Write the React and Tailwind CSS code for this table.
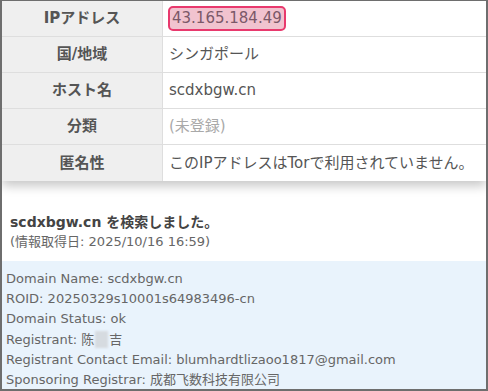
const rows = [
  { label: 'IPアドレス', value: '43.165.184.49', kind: 'ip' },
  { label: '国/地域', value: 'シンガポール' },
  { label: 'ホスト名', value: 'scdxbgw.cn' },
  { label: '分類', value: '(未登録)', kind: 'muted' },
  { label: '匿名性', value: 'このIPアドレスはTorで利用されていません。' },
];

const whois = [
  'Domain Name: scdxbgw.cn',
  'ROID: 20250329s10001s64983496-cn',
  'Domain Status: ok',
  null,
  'Registrant Contact Email: blumhardtlizaoo1817@gmail.com',
  'Sponsoring Registrar: 成都飞数科技有限公司',
];

const App = () => {
  return (
    <div
      className="w-[488px] h-[391px] overflow-hidden bg-white border-t border-l-2 border-r-2 border-b-2 border-[#6e6e6e] text-[#555]"
      style={{ fontFamily: '"DejaVu Sans", "Noto Sans CJK JP", sans-serif' }}
    >
      <div className="shadow-[0_5px_10px_rgba(0,0,0,0.22)]">
        {rows.map((row, i) => (
          <div
            key={row.label}
            className={`flex h-[36px] ${i < rows.length - 1 ? 'border-b border-[#dedede]' : ''}`}
          >
            <div className="w-[161px] flex-shrink-0 bg-[#efefef] border-r border-[#dedede] flex items-center justify-center font-bold text-[15px] text-[#555]">
              {row.label}
            </div>
            <div className="flex-1 flex items-center pl-[5px] text-[15px]">
              {row.kind === 'ip' ? (
                <span className="px-[2px] h-[25px] flex items-center rounded-[5px] border-2 border-[#e8396d] bg-[#f1c3cf] text-[#7b5868]">
                  {row.value}
                </span>
              ) : (
                <span className={`pl-[1px] ${row.kind === 'muted' ? 'text-[#a9a9a9]' : 'text-[#555]'}`}>
                  {row.value}
                </span>
              )}
            </div>
          </div>
        ))}
      </div>

      <div className="pt-[31px] pl-[8px] pb-[9px]">
        <div className="font-bold text-[14px] leading-[20px] text-[#444]">scdxbgw.cn を検索しました。</div>
        <div className="text-[13px] leading-[20px] text-[#666]">(情報取得日: 2025/10/16 16:59)</div>
      </div>

      <div className="bg-[#e9f3fc] pt-[8px] pl-[4px] pb-[10px] text-[13px] leading-[20.2px] text-[#666]">
        {whois.map((line, i) =>
          line ? (
            <div key={i}>{line}</div>
          ) : (
            <div key={i} className="flex items-center">
              Registrant: 陈
              <span className="inline-block w-[13px] h-[17px] bg-[#d6dbe0] blur-[1px] mx-[1px]" />
              吉
            </div>
          )
        )}
      </div>
    </div>
  );
};

export default App;
